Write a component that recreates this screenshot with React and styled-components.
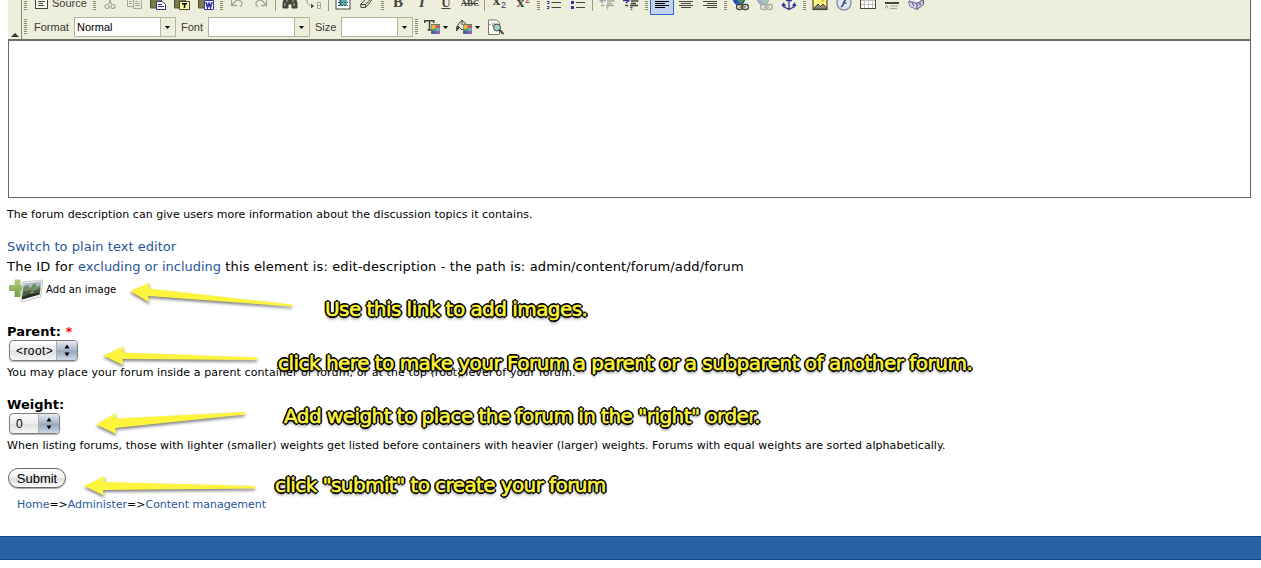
import React from "react";
import styled, { createGlobalStyle, css } from "styled-components";

const GlobalStyle = createGlobalStyle`
  html, body { margin: 0; padding: 0; background: #fff; }
  body { font-family: Verdana, "DejaVu Sans", sans-serif; color: #000; overflow: hidden; }
  svg { display: block; }
`;

const Page = styled.div`
  position: relative;
  width: 1261px;
  height: 568px;
  overflow: hidden;
`;

/* ---------- editor ---------- */
const Editor = styled.div`
  box-sizing: border-box;
  width: 1243px;
  height: 198px;
  margin-left: 8px;
  display: flex;
  flex-direction: column;
  border-right: 1px solid #666;
`;
const Toolbar = styled.div`
  box-sizing: border-box;
  height: 41px;
  flex: none;
  display: flex;
  background: #eeeedd;
  border-bottom: 2px solid #6d6f66;
`;
const Collapser = styled.div`
  box-sizing: border-box;
  width: 14px;
  display: flex;
  align-items: flex-end;
  justify-content: center;
  padding-bottom: 2px;
  border-right: 1px solid #8a8a78;
`;
const Rows = styled.div`
  display: flex;
  flex-direction: column;
`;
const ToolRow = styled.div`
  display: flex;
  align-items: center;
  height: 24px;
  margin-top: ${(p) => p.$shift}px;
`;
const Slot = styled.div`
  box-sizing: border-box;
  width: ${(p) => p.$w || 24}px;
  height: 24px;
  flex: none;
  display: flex;
  align-items: center;
  justify-content: center;
  ${(p) =>
    p.$on &&
    css`
      background: #c1d2ee;
      border: 1px solid #316ac5;
    `}
`;
const DropSlot = styled.div`
  width: 13px;
  padding-left: 2px;
  flex: none;
`;
const Handle = styled.div`
  width: 3px;
  height: 16px;
  margin: 0 ${(p) => p.$r ?? 2}px 0 2px;
  flex: none;
  background: repeating-linear-gradient(#8c8a6c 0 1px, #eeeedd 1px 2px);
`;
const Separator = styled.div`
  width: 1px;
  height: 16px;
  margin: 0 2px;
  flex: none;
  background: #9a9c80;
`;
const ToolText = styled.span`
  font: 11px/14px "Liberation Sans", Arial, sans-serif;
  width: ${(p) => p.$w}px;
  padding-left: ${(p) => p.$pl || 0}px;
  flex: none;
  color: #3a3a34;
  white-space: nowrap;
`;
const Combo = styled.div`
  box-sizing: border-box;
  width: ${(p) => p.$w}px;
  height: 20px;
  margin-right: ${(p) => p.$r}px;
  flex: none;
  display: flex;
  border: 1px solid #b4b59c;
  background: #fff;
  font: 11px/18px "Liberation Sans", Arial, sans-serif;
`;
const ComboValue = styled.div`
  flex: 1;
  padding-left: 2px;
`;
const ComboArrow = styled.div`
  width: 13px;
  padding-right: 1px;
  display: flex;
  align-items: center;
  justify-content: center;
  background: #eeeedd;
  border-left: 1px solid #b4b59c;
`;
const EditArea = styled.div`
  flex: 1;
  background: #fff;
  border-left: 1px solid #666;
  border-bottom: 1px solid #666;
`;

/* ---------- form ---------- */
const Form = styled.div`
  display: flex;
  flex-direction: column;
  align-items: flex-start;
  padding-left: 7px;
`;
const Hint = styled.div`
  font-size: 11px;
  line-height: 16px;
  margin-top: ${(p) => p.$mt}px;
  letter-spacing: ${(p) => p.$ls || 0}px;
  white-space: nowrap;
`;
const Line = styled.div`
  font-size: 13px;
  line-height: 20px;
  margin-top: ${(p) => p.$mt || 0}px;
  letter-spacing: ${(p) => p.$ls || 0}px;
  white-space: nowrap;
`;
const Lead = styled.span`
  letter-spacing: 0.24px;
`;
const Link = styled.span`
  color: #27569c;
  letter-spacing: ${(p) => (p.$tight ? "-0.01px" : "inherit")};
`;
const AddImage = styled.div`
  display: flex;
  align-items: center;
  height: 26px;
  gap: 3px;
  font: 10px/14px Verdana, "DejaVu Sans", sans-serif;
  letter-spacing: 0.08px;
`;
const Label = styled.div`
  font-size: 13px;
  font-weight: bold;
  line-height: 18px;
  margin-top: ${(p) => p.$mt}px;
`;
const Required = styled.span`
  color: #f00;
`;
const Select = styled.div`
  box-sizing: border-box;
  width: ${(p) => p.$w}px;
  height: 21px;
  margin: ${(p) => p.$mt || 0}px 0 0 2px;
  display: flex;
  overflow: hidden;
  border: 1px solid #7d7d7d;
  border-radius: 4px;
  background: linear-gradient(#fdfdfd, #ececec 50%, #dedede 51%, #f6f6f6);
  box-shadow: 0 1px 1px rgba(0, 0, 0, 0.3);
  font: 12px/20px "Liberation Sans", Arial, sans-serif;
`;
const SelectValue = styled.div`
  flex: 1;
  padding-left: 6px;
  letter-spacing: 0.4px;
`;
const SelectKnob = styled.div`
  width: 20px;
  display: flex;
  align-items: center;
  justify-content: center;
  background: linear-gradient(#e6ebf1, #a9b7c8 48%, #94a5b9 52%, #cdd9e6);
  border-left: 1px solid #a4adb8;
`;
const Submit = styled.div`
  box-sizing: border-box;
  width: 58px;
  height: 20px;
  margin: 14px 0 0 1px;
  border: 1px solid #666;
  border-radius: 10px;
  background: linear-gradient(#fff, #efefef 48%, #dcdcdc 52%, #fafafa);
  box-shadow: 0 1px 1px rgba(0, 0, 0, 0.35);
  font: 13px/19px "Liberation Sans", Arial, sans-serif;
  text-align: center;
`;
const Crumbs = styled.div`
  font-size: 11px;
  line-height: 16px;
  margin: 9px 0 0 10px;
  letter-spacing: -0.02px;
`;
const Footer = styled.div`
  box-sizing: border-box;
  height: 24px;
  margin-top: 23px;
  background: #2762a5;
  border-top: 1px solid #104b82;
  border-bottom: 1px solid #104b82;
`;

/* ---------- annotations over the page ---------- */
const Note = styled.div`
  position: absolute;
  left: ${(p) => p.$x}px;
  top: ${(p) => p.$y}px;
  font: 20px/24px Verdana, "DejaVu Sans", sans-serif;
  letter-spacing: ${(p) => p.$ls}px;
  white-space: nowrap;
  color: #fdf53b;
  -webkit-text-stroke: 0.6px #fdf53b;
  text-shadow: 2px 0 0 #000, -2px 0 0 #000, 0 2px 0 #000, 0 -2px 0 #000,
    1.4px 1.4px 0 #000, -1.4px 1.4px 0 #000, 1.4px -1.4px 0 #000, -1.4px -1.4px 0 #000,
    0 3px 3px rgba(0, 0, 0, 0.6);
`;
const Arrows = styled.svg`
  position: absolute;
  left: 0;
  top: 0;
  pointer-events: none;
  filter: drop-shadow(0 2px 1.5px rgba(0, 0, 0, 0.5));
`;

/* ---------- icons, each on a 16px grid ---------- */
const Icon = ({ children, w = 16 }) => (
  <svg width={w} height="16" viewBox={`0 0 ${w} 16`} fill="none" stroke="#45453c">
    {children}
  </svg>
);
const Down = () => (
  <svg width="5" height="3" viewBox="0 0 5 3"><path d="M0 0h5L2.5 3z" fill="#000" /></svg>
);
const SourceIcon = () => (
  <Icon w={14}>
    <rect x="1.5" y="0.5" width="12" height="13" fill="#f8f8f0" />
    <path d="M4 4.500h4M4 6.500h7M5 8.500h4M4 10.500h6" />
  </Icon>
);
const CutIcon = () => (
  <Icon>
    <g stroke="#a5a59a" strokeWidth="1.200">
      <path d="M5 0l4.500 9M11 0L6.500 9" />
      <circle cx="5" cy="11.500" r="2" /><circle cx="11" cy="11.500" r="2" />
    </g>
  </Icon>
);
const CopyIcon = () => (
  <Icon>
    <g stroke="#a5a59a" fill="#eeeedd">
      <path d="M1.500.5h7v11h-7z" /><path d="M3 3.500h4M3 6.500h3M3 8.500h3" />
      <path d="M7.500 3.500h5l3 2.500v7.500h-8z" /><path d="M9 6.500h3M9 8.500h5M9 10.500h5" />
    </g>
  </Icon>
);
const PasteIcon = ({ kind }) => (
  <Icon>
    <path d="M.5 .5h11v12.500H.5z" fill="#7c7c4c" stroke="#4c4c34" />
    {kind === "page" && <><path d="M6.500 6.500h5.500l3.500 3v5h-9z" fill="#fff" stroke="#34347c" /><path d="M8 9.500h4M8 11.500h6" stroke="#34347c" /></>}
    {kind === "text" && <><path d="M5.500 6.500h10v8h-10z" fill="#ffff9c" /><path d="M8 8.700h5M10.500 8.500v4.500" stroke="#000" strokeWidth="1.500" /></>}
    {kind === "word" && <><path d="M6.500 5.500h9v9h-9z" fill="#fff" stroke="#34349c" /><path d="M8 7l1.500 5.500 1.500-4 1.500 4L14 7" stroke="#3434ac" strokeWidth="1.700" /></>}
  </Icon>
);
const UndoIcon = ({ flip }) => (
  <Icon>
    <g transform={flip ? "translate(16 0) scale(-1 1)" : undefined} stroke="#a5a59a" strokeWidth="1.300">
      <path d="M2.500 5v5.500H8M3 10l3.500-4c3-2 7 0 6.500 3l-2 3" />
    </g>
  </Icon>
);
const FindIcon = () => (
  <Icon>
    <path d="M3 2h3l1 3h2l1-3h3l2 6v5h-5V9H6v4H1V8z" fill="#45453c" />
    <path d="M3 8v3M12 8v3M5 4v3M11 4v3" stroke="#bdbdae" />
  </Icon>
);
const ReplaceIcon = () => (
  <Icon>
    <path d="M1 5c0 5 3 6 6 6" stroke="#77776c" strokeDasharray="1.500 1" />
    <path d="M5 8.500l3 2.500-3 2.500z" fill="#45453c" stroke="none" />
    <path d="M11.500 7.500v6h3v-6zM11.500 10.500h3" stroke="#a5a59a" />
  </Icon>
);
const SelectAllIcon = () => (
  <Icon>
    <rect x="1" y="0" width="14" height="14" fill="#fff" />
    <rect x="4" y="2" width="8" height="9" fill="#62abb0" stroke="none" />
    <path d="M3 4.500h10M3 7.500h10M3 10.500h10M5.500 2v9" stroke="#2b5c60" strokeDasharray="2 1" />
  </Icon>
);
const EraserIcon = () => (
  <Icon><path d="M1.500 9.500L8 2.500h6.500L9 10l-3 2.500H2zM1.500 9.500h5L13 2.500M6.500 9.500v3" fill="#e6e6dc" /></Icon>
);
const Letters = ({ x, y, size, weight = "bold", slant, fill = "#45453c", family = "Liberation Serif", children }) => (
  <text x={x} y={y} fontSize={size} fontWeight={weight} fontStyle={slant ? "italic" : undefined}
    fontFamily={`"${family}", serif`} fill={fill} stroke="none" textAnchor="middle">
    {children}
  </text>
);
const BoldIcon = () => <Icon><Letters x={8} y={12} size={15}>B</Letters></Icon>;
const ItalicIcon = () => <Icon><Letters x={8} y={12} size={15} slant>I</Letters></Icon>;
const UnderlineIcon = () => (
  <Icon><Letters x={8} y={11.500} size={13}>U</Letters><path d="M3.500 13.500h9" /></Icon>
);
const StrikeIcon = () => (
  <Icon w={18}><Letters x={9} y={11} size={9}>ABC</Letters><path d="M1 8.500h16" /></Icon>
);
const ScriptIcon = ({ sup }) => (
  <Icon>
    <Letters x={5.5} y={sup ? 12 : 9.500} size={15}>x</Letters>
    <Letters x={12.500} y={sup ? 7.500 : 13} size={9} weight="normal" family="Liberation Sans" fill={sup ? "#9a3030" : "#34347c"}>2</Letters>
  </Icon>
);
const OrderedIcon = () => (
  <Icon><path d="M1 2.500h1.500v2M1 6.500h2v2H1M1 11.500h2v2H1" stroke="#34349c" /><path d="M5.500 2.500H15M5.500 7.500H15M5.500 12.500H15" /></Icon>
);
const BulletIcon = () => (
  <Icon><path d="M1 1h3v3H1zM1 6h3v3H1zM1 11h3v3H1z" fill="#34349c" stroke="none" /><path d="M6 2.500h9M6 7.500h9M6 12.500h9" /></Icon>
);
const IndentIcon = ({ off }) => (
  <Icon>
    <g stroke={off ? "#a5a59a" : "#45453c"}>
      <path d="M7 3.500H15M8 6h7.500M8 8.500h5M2 10.500h3M7 10.500h8M7.500 12.500h2M8.500 14v1" strokeWidth="1.300" />
      <path d={off ? "M7 5.500H1M4 3L1 5.500 4 8" : "M0 5.500h6M3 3l3 2.500L3 8"} stroke={off ? "#a5a5b4" : "#34349c"} strokeWidth="1.300" />
    </g>
  </Icon>
);
const AlignIcon = ({ at, dark }) => {
  const x = { left: 1, center: 3, right: 5 }[at];
  return (
    <Icon>
      <path
        stroke={dark ? "#000" : "#45453c"}
        d={`M1 2.500h14M${x} 4.500h10M1 6.500h14M${x} 8.500h10M1 10.500h14M${x} 12.500h10`}
      />
    </Icon>
  );
};
const LinkIcon = ({ off }) => (
  <Icon>
    <g opacity={off ? 0.4 : 1}>
      <circle cx="6" cy="4.500" r="5.500" fill="#2f4fc8" stroke="#22348a" />
      <path d="M6 0h4l1 5-3 4-3-3z" fill="#3f9a48" stroke="none" />
      <rect x="3.500" y="9.500" width="6.500" height="5" rx="2.400" fill="#eeeedd" strokeWidth="1.300" />
      <rect x="9" y="9.500" width="6.500" height="5" rx="2.400" fill="#eeeedd" strokeWidth="1.300" />
      <path d="M6 12h7" />
    </g>
  </Icon>
);
const AnchorIcon = () => (
  <Icon><path d="M8 0v14.500M5 5.500h6M2.500 8.500v3L8 14.500l5.500-3v-3M1 11l1.500-2.500L4.500 11M11.500 11l2-2.500L15 11" stroke="#34349c" strokeWidth="1.300" /></Icon>
);
const ImageIcon = () => (
  <Icon>
    <rect x="1" y="0.500" width="14" height="14" fill="#fdf57a" strokeWidth="1.200" />
    <path d="M2 13l4-4 2.500 2.500L11 9l3.500 4v1H2z" fill="#8c8c80" />
    <circle cx="10.500" cy="5.500" r="1.600" fill="#e6c83a" stroke="none" />
  </Icon>
);
const FlashIcon = () => (
  <Icon>
    <circle cx="8" cy="8" r="7" fill="#dfe8f0" stroke="#8c98a4" strokeWidth="1.500" />
    <path d="M5 12q2-1 3-4.500t4-4M6.500 8h4" stroke="#36597c" strokeWidth="1.700" />
  </Icon>
);
const TableIcon = () => (
  <Icon>
    <rect x="0.500" y="0.500" width="15" height="13" fill="#fff" />
    <path d="M4.500 1v12M8.500 1v12M12.500 1v12M1 5.500h14M1 9.500h14" stroke="#c0c0b8" />
  </Icon>
);
const RuleIcon = () => (
  <Icon>
    <path d="M1 8h14" strokeWidth="2" />
    <path d="M1 13.500l1.500-3.500L4 13.500M6 11h8M6 13.500h7" stroke="#a5a59a" />
  </Icon>
);
const CubeIcon = () => (
  <Icon>
    <path d="M1 6l5-4 9 2-5 4z" fill="#fff" stroke="#88889c" />
    <path d="M.5 6.500l8.500 2v6l-7-3z" fill="#dcdcf0" stroke="#77779a" />
    <path d="M9 8.500l6.500-4v5L9 14.500z" fill="#c4c4d6" stroke="#66667a" />
    <path d="M4 8l2 3M6 5l3-1M12 8v2" stroke="#3434ac" />
  </Icon>
);
const Swatch = ({ x, y }) => (
  <g stroke="none">
    <rect x={x} y={y} width="9" height="10" fill="#77776c" />
    <rect x={x + 0.500} y={y + 1} width="4" height="4" fill="#e0bd3c" />
    <rect x={x + 5} y={y + 1} width="3.500" height="3" fill="#d65c5c" />
    <rect x={x + 0.500} y={y + 5} width="4" height="2" fill="#4d9c58" />
    <rect x={x + 5} y={y + 4} width="3.500" height="3" fill="#58b6c4" />
    <rect x={x + 0.500} y={y + 7} width="4" height="2.500" fill="#3c5cc0" />
    <rect x={x + 5} y={y + 7} width="3.500" height="2.500" fill="#a45cb8" />
  </g>
);
const TextColorIcon = () => (
  <Icon w={17}>
    <path d="M.8 4V1.700h9V4M5.500 2v9M3.500 11h4" strokeWidth="1.500" />
    <Swatch x={7} y={5} />
  </Icon>
);
const FillColorIcon = () => (
  <Icon w={17}>
    <path d="M6 1l5 5-5 5-4.500-4.500zM6 1v5" fill="#e6e6dc" />
    <path d="M1 7l-.5 5 2.500-3z" fill="#45453c" />
    <Swatch x={7} y={5} />
  </Icon>
);
const PreviewIcon = () => (
  <Icon w={17}>
    <path d="M.5 1h8l3 3v11.500H.5z" fill="#fff" stroke="#77776c" />
    <path d="M1 5.500h2M4.500 4v3.500M5 4h2v2H5" stroke="#a5a59a" />
    <circle cx="9" cy="8.500" r="3.500" fill="#9fd0d0" />
    <path d="M11.500 11l4 4" strokeWidth="2" />
  </Icon>
);
const Knob = () => (
  <svg width="6" height="13" viewBox="0 0 6 13"><path d="M.5 4.500L3 .5l2.500 4zM.5 8.500h5L3 12.500z" fill="#000" /></svg>
);
const PhotoIcon = () => (
  <svg width="36" height="26" viewBox="0 0 36 26">
    <defs>
      <linearGradient id="plus" x1="0" y1="0" x2="0" y2="1">
        <stop offset="0" stopColor="#b4ca80" /><stop offset="1" stopColor="#73a040" />
      </linearGradient>
    </defs>
    <path d="M7.500 2.500h6v5.500h6v6h-6v6h-6v-6H2V8h5.500z" fill="url(#plus)" />
    <path d="M15.500 5L36 3l-2.500 17L14 25z" fill="#f4f4f0" stroke="#aaa" strokeWidth=".6" />
    <path d="M16.500 6.500L34.500 4.500 32.500 17.500 15 22.500z" fill="#a8bdc6" />
    <path d="M16.400 10l4-2 3 3 4-5 3 4 3-2-1.500 9-17 5z" fill="#6d8a62" />
    <path d="M16 15l5-3 4 3 8.500-4-1 6-17.500 5z" fill="#4b5a40" />
    <path d="M15 20l8-3 9.500-1v1.500L15 22.500z" fill="#262d26" />
    <path d="M19 14l3-2M27 12l3-2M23 16l4-1" stroke="#9aa878" />
  </svg>
);

const S = ({ children }) => <Slot>{children}</Slot>;

export default function App() {
  return (
    <>
      <GlobalStyle />
      <Page>
        <Editor>
          <Toolbar>
            <Collapser>
              <svg width="8" height="4" viewBox="0 0 8 4"><path d="M0 4L4 0l4 4z" fill="#333" /></svg>
            </Collapser>
            <Rows>
              <ToolRow $shift={-9}>
                <Handle $r={7} />
                <Slot $w={14}><SourceIcon /></Slot>
                <ToolText $w={39} $pl={4}>Source</ToolText>
                <Handle />
                <S><CutIcon /></S>
                <S><CopyIcon /></S>
                <S><PasteIcon kind="page" /></S>
                <S><PasteIcon kind="text" /></S>
                <S><PasteIcon kind="word" /></S>
                <Handle />
                <S><UndoIcon /></S>
                <S><UndoIcon flip /></S>
                <Separator />
                <S><FindIcon /></S>
                <S><ReplaceIcon /></S>
                <Separator />
                <S><SelectAllIcon /></S>
                <S><EraserIcon /></S>
                <Handle />
                <S><BoldIcon /></S>
                <S><ItalicIcon /></S>
                <S><UnderlineIcon /></S>
                <S><StrikeIcon /></S>
                <Separator />
                <S><ScriptIcon /></S>
                <S><ScriptIcon sup /></S>
                <Handle />
                <S><OrderedIcon /></S>
                <S><BulletIcon /></S>
                <Separator />
                <S><IndentIcon off /></S>
                <S><IndentIcon /></S>
                <Handle />
                <Slot $on><AlignIcon at="left" dark /></Slot>
                <S><AlignIcon at="center" /></S>
                <S><AlignIcon at="right" /></S>
                <Handle />
                <S><LinkIcon /></S>
                <S><LinkIcon off /></S>
                <S><AnchorIcon /></S>
                <Handle />
                <S><ImageIcon /></S>
                <S><FlashIcon /></S>
                <S><TableIcon /></S>
                <S><RuleIcon /></S>
                <S><CubeIcon /></S>
              </ToolRow>
              <ToolRow $shift={0}>
                <Handle $r={7} />
                <ToolText $w={40}>Format</ToolText>
                <Combo $w={102} $r={5}><ComboValue>Normal</ComboValue><ComboArrow><Down /></ComboArrow></Combo>
                <ToolText $w={27}>Font</ToolText>
                <Combo $w={102} $r={5}><ComboValue /><ComboArrow><Down /></ComboArrow></Combo>
                <ToolText $w={26}>Size</ToolText>
                <Combo $w={72} $r={0}><ComboValue /><ComboArrow><Down /></ComboArrow></Combo>
                <Handle $r={6} />
                <Slot $w={17}><TextColorIcon /></Slot>
                <DropSlot><Down /></DropSlot>
                <Slot $w={17}><FillColorIcon /></Slot>
                <DropSlot><Down /></DropSlot>
                <Slot $w={17}><PreviewIcon /></Slot>
              </ToolRow>
            </Rows>
          </Toolbar>
          <EditArea />
        </Editor>

        <Form>
          <Hint $mt={9} $ls={0.04}>The forum description can give users more information about the discussion topics it contains.</Hint>
          <Line $mt={14} $ls={0.04}><Link>Switch to plain text editor</Link></Line>
          <Line $ls={0.14}>
            <Lead>The ID for </Lead><Link $tight>excluding or including</Link> this element is: edit-description - the path is: admin/content/forum/add/forum
          </Line>
          <AddImage><PhotoIcon />Add an image</AddImage>
          <Label $mt={20}>Parent: <Required>*</Required></Label>
          <Select $w={69} $mt={-1}><SelectValue>&lt;root&gt;</SelectValue><SelectKnob><Knob /></SelectKnob></Select>
          <Hint $mt={4} $ls={0.1}>You may place your forum inside a parent container or forum, or at the top (root) level of your forum.</Hint>
          <Label $mt={15}>Weight:</Label>
          <Select $w={51} $mt={-1}><SelectValue>0</SelectValue><SelectKnob><Knob /></SelectKnob></Select>
          <Hint $mt={4} $ls={0.065}>
            When listing forums, those with lighter (smaller) weights get listed before containers with heavier (larger) weights. Forums with equal weights are sorted alphabetically.
          </Hint>
          <Submit>Submit</Submit>
          <Crumbs>
            <Link>Home</Link>=&gt;<Link>Administer</Link>=&gt;<Link>Content management</Link>
          </Crumbs>
        </Form>
        <Footer />

        <Arrows width="310" height="568" viewBox="0 0 310 568" fill="#fdf53b">
          <path d="M130 291L150 282.500 148.500 288.500 292 304.500 292 306.500 148 296 149.500 302.500z" />
          <path d="M103 355.500L124 346.500 122.500 352.500 257 357.500 257 360 122.500 359 123 365z" />
          <path d="M96 424.500L116 413 115 418.500 245 412 245 414.500 115.500 428 116 434z" />
          <path d="M84 486L105 476 104 482 255 486 255 488.500 103 490 104 495.500z" />
        </Arrows>
        <Note $x={325} $y={297} $ls={-0.55}>Use this link to add images.</Note>
        <Note $x={278} $y={351} $ls={-0.52}>click here to make your Forum a parent or a subparent of another forum.</Note>
        <Note $x={284} $y={404} $ls={-0.55}>Add weight to place the forum in the "right" order.</Note>
        <Note $x={275} $y={473} $ls={-0.6}>click "submit" to create your forum</Note>
      </Page>
    </>
  );
}
